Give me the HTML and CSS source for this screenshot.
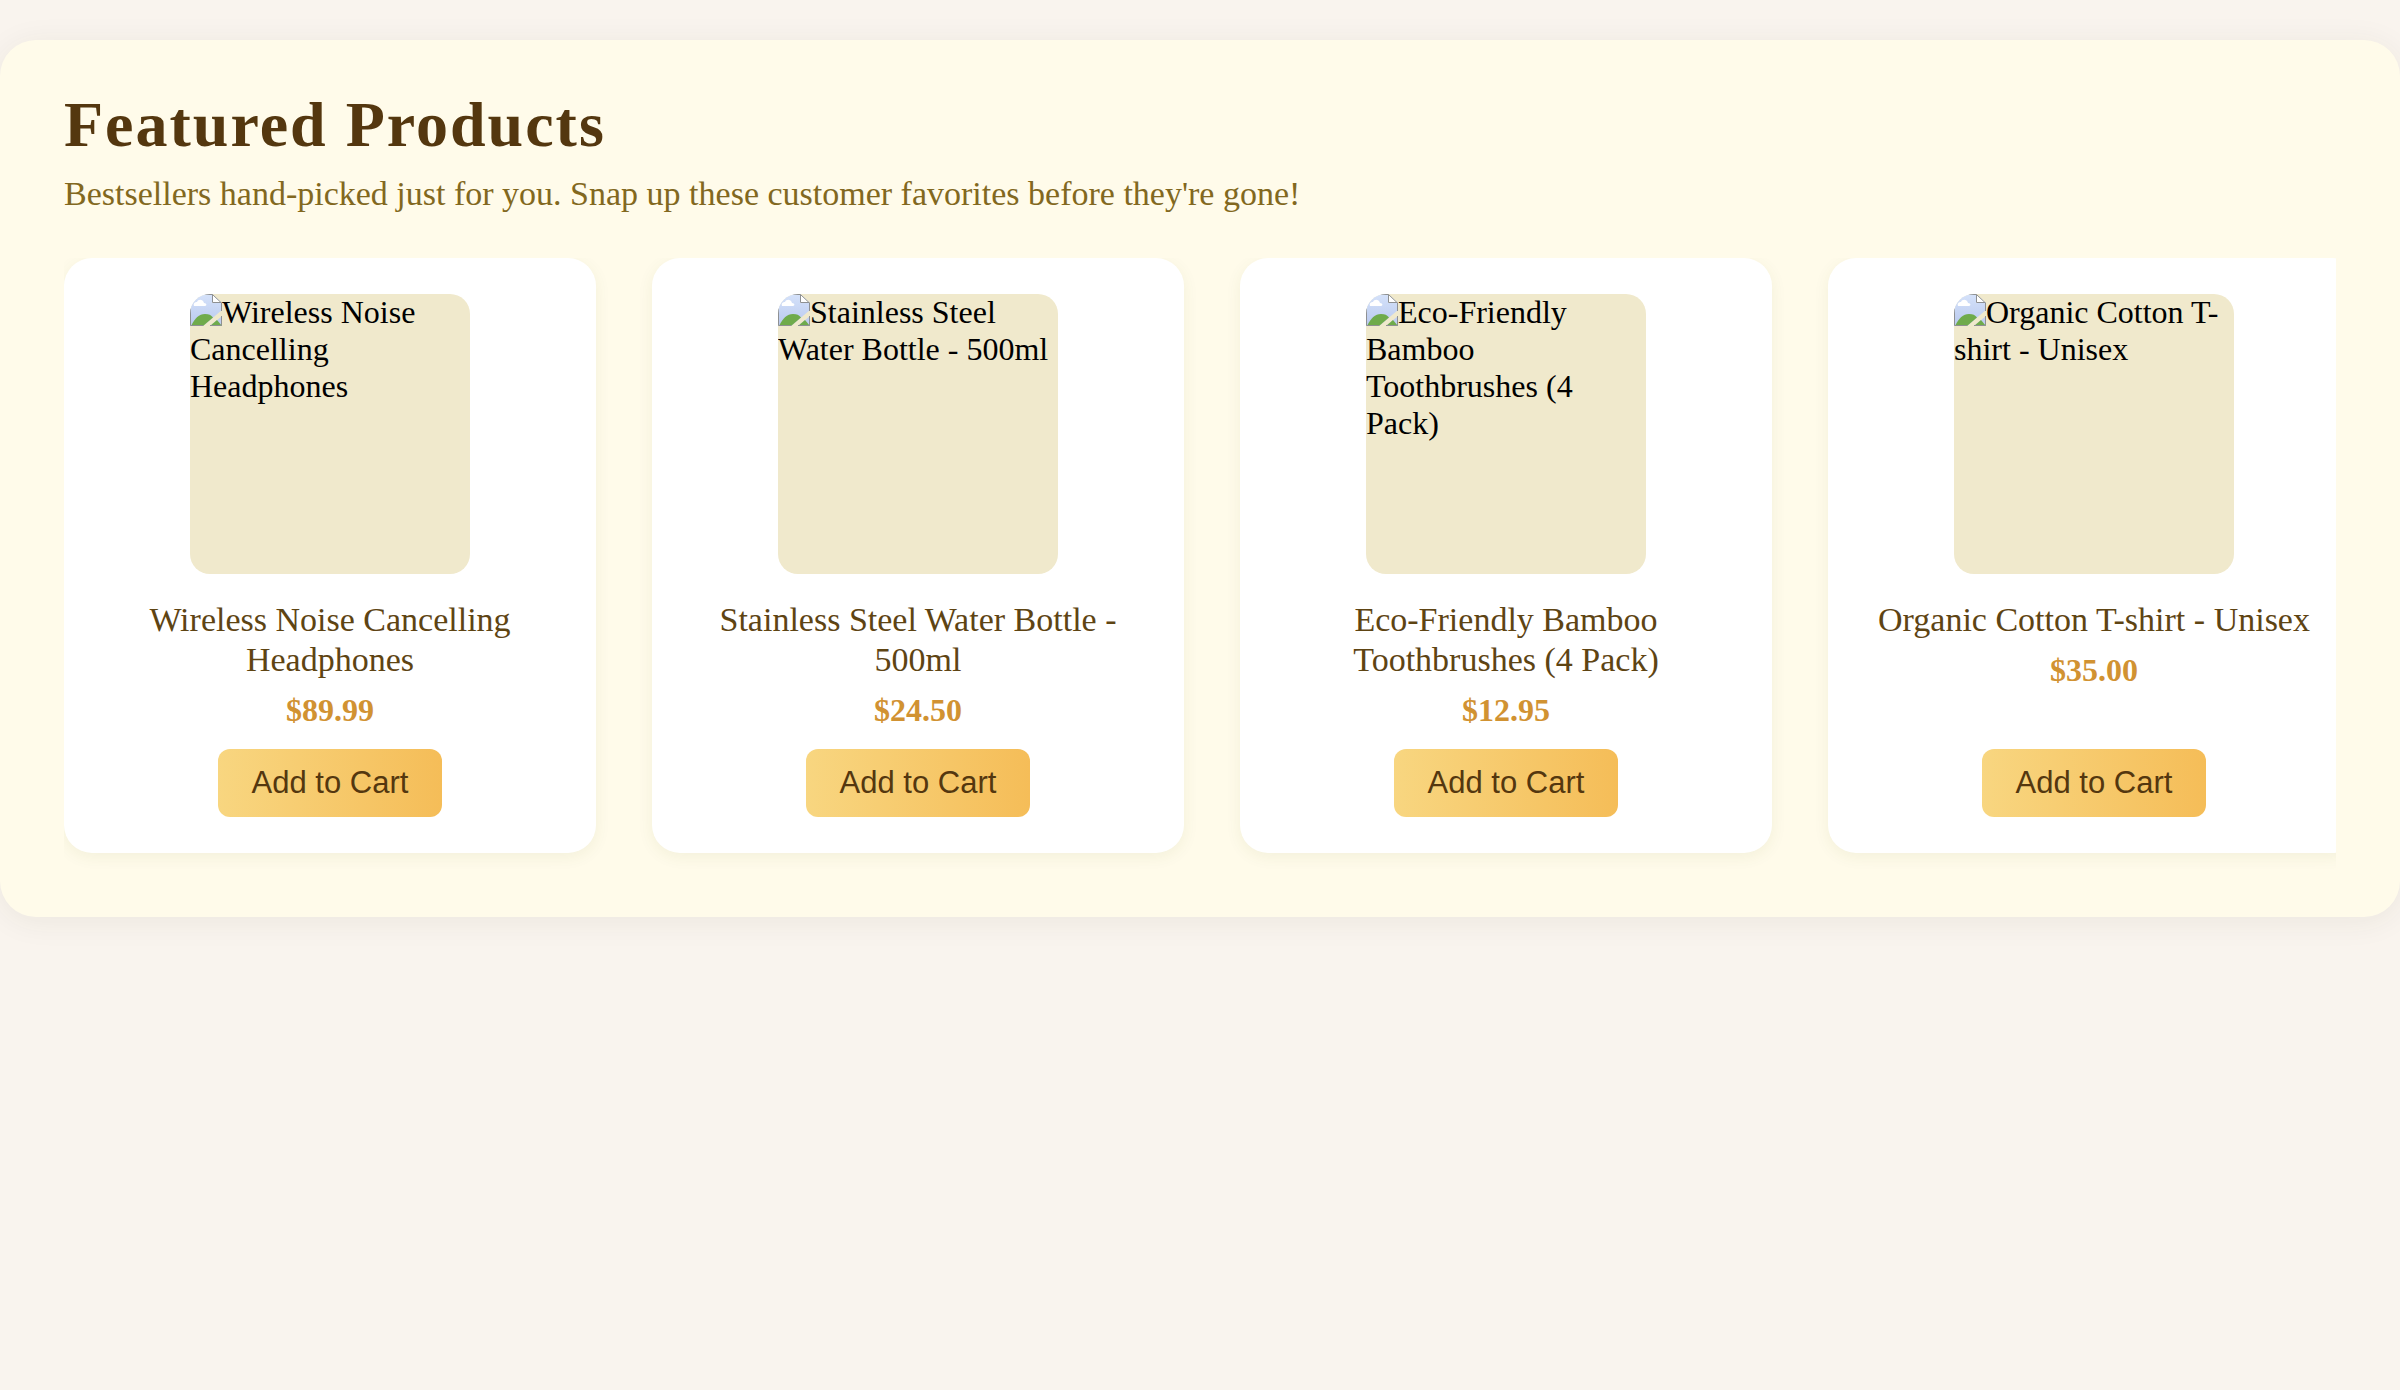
FILE: index.html
```html
<!DOCTYPE html>
<html lang="en">
<head>
<meta charset="utf-8">
<meta name="viewport" content="width=device-width, initial-scale=1">
<title>Featured Products</title>
<link rel="stylesheet" href="styles.css">
</head>
<body>
<svg class="sprite" aria-hidden="true">
  <defs>
    <linearGradient id="sky" x1="0" y1="0" x2="0" y2="1">
      <stop offset="0" stop-color="#d5e2fa"/>
      <stop offset="1" stop-color="#b9c9ee"/>
    </linearGradient>
    <symbol id="broken" viewBox="0 0 32 32">
      <path d="M0 0H22L32 9V16L13 32H0Z" fill="url(#sky)"/>
      <path d="M1 32C5 24 9 20 15 20C19 20 21 21 23 23.500L13 32Z" fill="#6fab4b"/>
      <path d="M20 32L32 22V32Z" fill="#c0cef0"/>
      <path d="M20 32L27 26L32 32Z" fill="#6fab4b"/>
      <path d="M4 12C3 9 5 8 7 8C8 5 13 5 14 9C17 9 17 12 15 12Z" fill="#fff"/>
      <path d="M22 0V9H32Z" fill="#fff"/>
      <path d="M13 31.500H.5V.5H22.500L31.500 9V17M22.500 .5V8.500H31.500M31.500 22V31.500H20" fill="none" stroke="#8e9092"/>
    </symbol>
  </defs>
</svg>
<section class="featured">
  <h2 class="title">Featured Products</h2>
  <p class="subtitle">Bestsellers hand-picked just for you. Snap up these customer favorites before they're gone!</p>
  <ul class="products">
    <li class="card">
      <div class="thumb"><svg class="thumb-icon" aria-hidden="true"><use href="#broken"/></svg>Wireless Noise Cancelling Headphones</div>
      <h3 class="name">Wireless Noise Cancelling Headphones</h3>
      <p class="price">$89.99</p>
      <button class="add" type="button">Add to Cart</button>
    </li>
    <li class="card">
      <div class="thumb"><svg class="thumb-icon" aria-hidden="true"><use href="#broken"/></svg>Stainless Steel Water Bottle - 500ml</div>
      <h3 class="name">Stainless Steel Water Bottle - 500ml</h3>
      <p class="price">$24.50</p>
      <button class="add" type="button">Add to Cart</button>
    </li>
    <li class="card">
      <div class="thumb"><svg class="thumb-icon" aria-hidden="true"><use href="#broken"/></svg>Eco-Friendly Bamboo Toothbrushes (4 Pack)</div>
      <h3 class="name">Eco-Friendly Bamboo Toothbrushes (4 Pack)</h3>
      <p class="price">$12.95</p>
      <button class="add" type="button">Add to Cart</button>
    </li>
    <li class="card">
      <div class="thumb"><svg class="thumb-icon" aria-hidden="true"><use href="#broken"/></svg>Organic Cotton T-shirt - Unisex</div>
      <h3 class="name">Organic Cotton T-shirt - Unisex</h3>
      <p class="price">$35.00</p>
      <button class="add" type="button">Add to Cart</button>
    </li>
  </ul>
</section>
</body>
</html>
```
FILE: styles.css
```css
* {
  box-sizing: border-box;
}

body {
  margin: 0;
  background: #f9f4ee;
  font-family: "Liberation Serif", "Times New Roman", serif;
  font-size: 32px;
  color: #000;
}

.sprite {
  position: absolute;
  width: 0;
  height: 0;
}

.featured {
  margin: 40px 0;
  padding: 48px 64px;
  border-radius: 36px;
  background: #fffbea;
  box-shadow: 0 4px 32px rgba(60, 50, 30, 0.07);
}

.title {
  margin: 0;
  font-size: 64px;
  line-height: 74px;
  font-weight: 700;
  letter-spacing: 2px;
  color: #54370f;
}

.subtitle {
  margin: 12px 0 44px;
  font-size: 34px;
  line-height: 40px;
  color: #826820;
}

.products {
  display: flex;
  gap: 56px;
  margin: 0;
  padding: 0 0 16px;
  list-style: none;
  overflow-x: auto;
  scrollbar-width: none;
}

.card {
  flex: 0 0 532px;
  display: flex;
  flex-direction: column;
  align-items: center;
  padding: 36px;
  border-radius: 28px;
  background: #fff;
  box-shadow: 0 4px 16px rgba(90, 100, 30, 0.07);
  text-align: center;
}

.thumb {
  width: 280px;
  height: 280px;
  margin-bottom: 26px;
  border-radius: 20px;
  background: #f0e9cc;
  line-height: 37px;
  text-align: left;
  overflow: hidden;
}

.thumb-icon {
  width: 32px;
  height: 32px;
  vertical-align: -3px;
}

.name {
  margin: 0 0 12px;
  font-size: 34px;
  line-height: 40px;
  font-weight: 400;
  color: #5e4413;
}

.price {
  margin: 0 0 20px;
  font-size: 32px;
  line-height: 37px;
  font-weight: 700;
  color: #d19232;
}

.add {
  margin-top: auto;
  padding: 16px 34px;
  border: 0;
  border-radius: 12px;
  background: linear-gradient(90deg, #f8d680, #f5bd58);
  font-family: "Liberation Sans", Arial, sans-serif;
  font-size: 31px;
  line-height: 36px;
  color: #54370f;
  cursor: pointer;
}
```
